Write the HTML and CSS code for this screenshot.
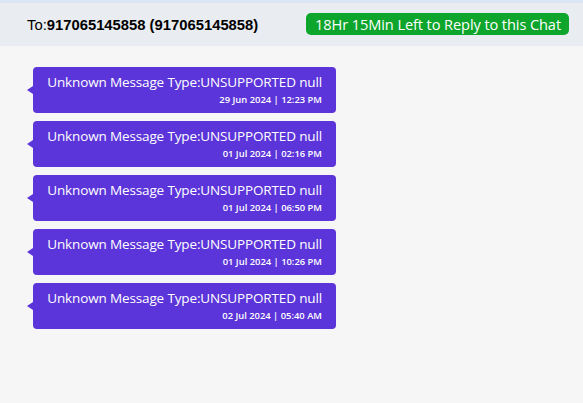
FILE: index.html
```html
<!DOCTYPE html>
<html>
<head>
<meta charset="utf-8">
<link rel="stylesheet" href="styles.css">
</head>
<body>
<div class="header">
  <div class="to">To:<b>917065145858 (917065145858)</b></div>
  <div class="badge">18Hr 15Min Left to Reply to this Chat</div>
</div>
<div class="messages">
  <div class="bubble"><div class="text">Unknown Message Type:UNSUPPORTED null</div><div class="time">29 Jun 2024 | 12:23 PM</div></div>
  <div class="bubble"><div class="text">Unknown Message Type:UNSUPPORTED null</div><div class="time">01 Jul 2024 | 02:16 PM</div></div>
  <div class="bubble"><div class="text">Unknown Message Type:UNSUPPORTED null</div><div class="time">01 Jul 2024 | 06:50 PM</div></div>
  <div class="bubble"><div class="text">Unknown Message Type:UNSUPPORTED null</div><div class="time">01 Jul 2024 | 10:26 PM</div></div>
  <div class="bubble"><div class="text">Unknown Message Type:UNSUPPORTED null</div><div class="time">02 Jul 2024 | 05:40 AM</div></div>
</div>
</body>
</html>
```
FILE: styles.css
```css
html, body { margin: 0; padding: 0; }
body {
  background: #f6f6f6;
  width: 583px;
  height: 403px;
  overflow: hidden;
  font-family: "Open Sans", "Noto Sans", sans-serif;
}
.header {
  box-sizing: border-box;
  height: 46px;
  border-top: 3px solid #dce6f6;
  background: #e9ecf0;
  display: flex;
  align-items: center;
  justify-content: space-between;
  padding: 0 14px 0 27px;
}
.to {
  font-family: "Liberation Sans", Arial, sans-serif;
  font-size: 14.8px;
  color: #000;
  padding-top: 1px;
}
.to b { font-weight: bold; }
.badge {
  background: #0ea52c;
  color: #fff;
  border-radius: 5px;
  height: 22px;
  line-height: 22px;
  padding: 0 8px 0 9px;
  font-size: 14.6px;
  margin-top: -1px;
  letter-spacing: -0.1px;
}
.messages {
  display: flex;
  flex-direction: column;
  align-items: flex-start;
  gap: 8px;
  padding: 21px 0 0 33px;
}
.bubble {
  position: relative;
  width: 303px;
  height: 46px;
  box-sizing: border-box;
  background: #5b35d9;
  color: #fff;
  border-radius: 4px;
  padding: 6px 14px 0 15px;
  display: flex;
  flex-direction: column;
  align-items: flex-end;
}
.bubble::before {
  content: "";
  position: absolute;
  left: -6px;
  top: 19px;
  border-style: solid;
  border-width: 4px 6px 4px 0;
  border-color: transparent #5b35d9 transparent transparent;
}
.text {
  font-size: 13.5px;
  line-height: 19px;
  letter-spacing: -0.14px;
  white-space: nowrap;
}
.time {
  font-size: 9.4px;
  font-weight: 600;
  line-height: 15px;
  letter-spacing: 0;
}
```
